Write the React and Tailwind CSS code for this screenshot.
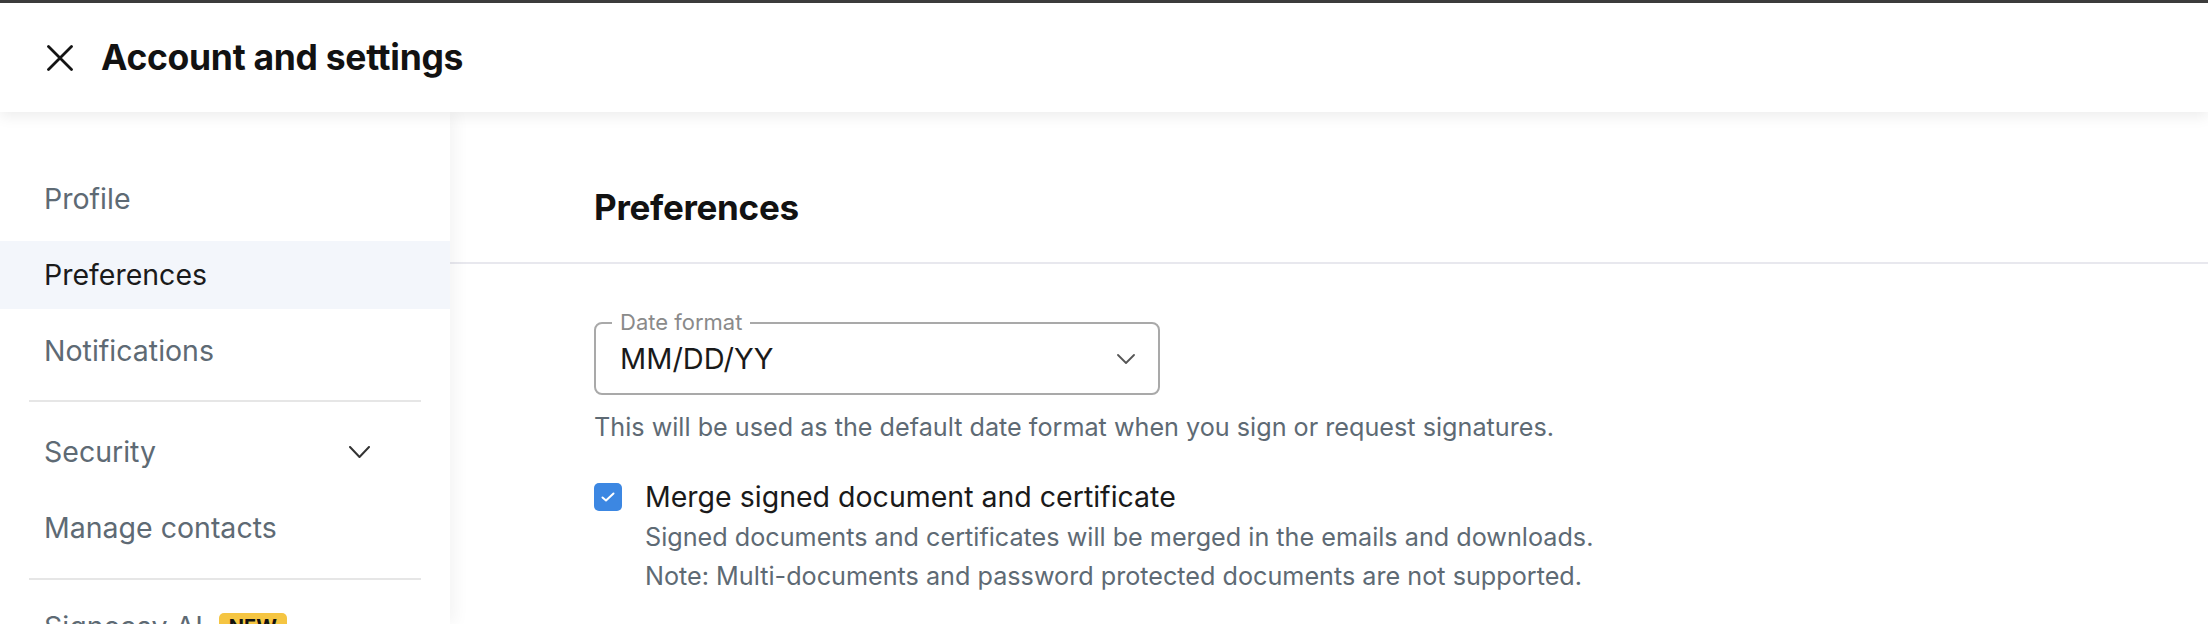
import React from "react";

const navTop = [
    { label: "Profile" },
    { label: "Preferences", active: true },
    { label: "Notifications" },
];

const Chevron = ({ className, w = 19, h = 10, stroke = 2 }) => (
    <svg width={w + 2} height={h + 2} viewBox={`-1 -1 ${w + 2} ${h + 2}`} className={className} fill="none">
        <polyline points={`0,0 ${w / 2},${h} ${w},0`} stroke="currentColor" strokeWidth={stroke} strokeLinecap="round" strokeLinejoin="round" />
    </svg>
);

const NavItem = ({ label, active, children }) => (
    <div
        className={`h-[68px] shrink-0 flex items-center justify-between pl-[44px] pr-[80px] text-[28.5px] leading-none ${
            active ? "bg-[#f3f6fb] text-[#1b1b1b]" : "text-[#5e6a74]"
        }`}
    >
        {label}
        {children}
    </div>
);

const Divider = () => <div className="mx-[29px] h-[2px] shrink-0 bg-[#e6e6e6]" />;

const App = () => {
    return (
        <div className="w-full h-[624px] overflow-hidden bg-white font-['Inter','Liberation_Sans',sans-serif]">
            {/* top strip */}
            <div className="h-[3px] bg-[#3d3d3d]" />

            {/* Header */}
            <header className="relative z-20 h-[109px] bg-white flex items-center pl-[47px] shadow-[0_4px_14px_rgba(0,0,0,0.08)]">
                <svg width="26" height="26" viewBox="0 0 26 26" className="text-[#141414]">
                    <path d="M1.5 1.5 L24.5 24.5 M24.5 1.5 L1.5 24.5" stroke="currentColor" strokeWidth="2.8" strokeLinecap="round" />
                </svg>
                <h1 className="ml-[28px] text-[35.5px] font-bold text-[#121212] tracking-[-0.3px]">Account and settings</h1>
            </header>

            <div className="flex h-[512px]">
                {/* Sidebar */}
                <aside className="relative z-10 w-[450px] shrink-0 bg-white pt-[53px] flex flex-col shadow-[6px_0_14px_rgba(0,0,0,0.045)]">
                    <div className="flex flex-col gap-2">
                        {navTop.map((item) => (
                            <NavItem key={item.label} {...item} />
                        ))}
                    </div>
                    <div className="mt-[15px]">
                        <Divider />
                    </div>
                    <div className="mt-4 flex flex-col gap-2">
                        <NavItem label="Security">
                            <Chevron className="text-[#333]" />
                        </NavItem>
                        <NavItem label="Manage contacts" />
                    </div>
                    <div className="mt-[16px]">
                        <Divider />
                    </div>
                    <div className="mt-[13px] h-[68px] shrink-0 flex items-center pl-[44px] text-[28.5px] leading-none text-[#5e6a74]">
                        Signeasy AI
                        <span className="ml-[16px] h-[28px] px-[10px] rounded-[5px] bg-[#f5c542] text-[#111] text-[20px] font-bold flex items-center">
                            NEW
                        </span>
                    </div>
                </aside>

                {/* Content */}
                <main className="flex-1 bg-white">
                    <div className="pl-[144px] pt-[75px] pb-[35px] border-b-2 border-[#e8e8ee]">
                        <h2 className="text-[35px] leading-[40px] font-bold text-[#121212] tracking-[-0.3px]">Preferences</h2>
                    </div>

                    <div className="pl-[144px] pt-[58px]">
                        {/* Date format select */}
                        <div className="relative w-[566px] h-[73px] border-2 border-[#a9a9a9] rounded-lg flex items-center justify-between pl-[24px] pr-[23px]">
                            <span className="absolute left-[16px] top-0 -translate-y-[60%] bg-white px-2 text-[22px] leading-none text-[#8a8a8a]">
                                Date format
                            </span>
                            <span className="text-[29px] text-[#1a1a1a] mt-[1px]">MM/DD/YY</span>
                            <Chevron w={16} h={8} stroke={1.8} className="text-[#555]" />
                        </div>

                        <p className="mt-[14px] text-[25.2px] leading-[36px] text-[#5e6a74]">
                            This will be used as the default date format when you sign or request signatures.
                        </p>

                        {/* Merge checkbox */}
                        <div className="mt-[32px] flex gap-[23px]">
                            <div className="mt-[6px] w-[28px] h-[28px] shrink-0 rounded-[5px] bg-[#3c87e2] flex items-center justify-center">
                                <svg width="16" height="12" viewBox="0 0 16 12" fill="none">
                                    <path d="M2.5 6.5 L6 9.5 L13.5 2.5" stroke="white" strokeWidth="2" strokeLinecap="round" strokeLinejoin="round" />
                                </svg>
                            </div>
                            <div>
                                <div className="text-[28.5px] leading-[40px] text-[#1a1a1a]">Merge signed document and certificate</div>
                                <p className="mt-[1px] text-[25.2px] leading-[39px] text-[#5e6a74]">
                                    Signed documents and certificates will be merged in the emails and downloads.
                                    <br />
                                    Note: Multi-documents and password protected documents are not supported.
                                </p>
                            </div>
                        </div>
                    </div>
                </main>
            </div>
        </div>
    );
};

export default App;
